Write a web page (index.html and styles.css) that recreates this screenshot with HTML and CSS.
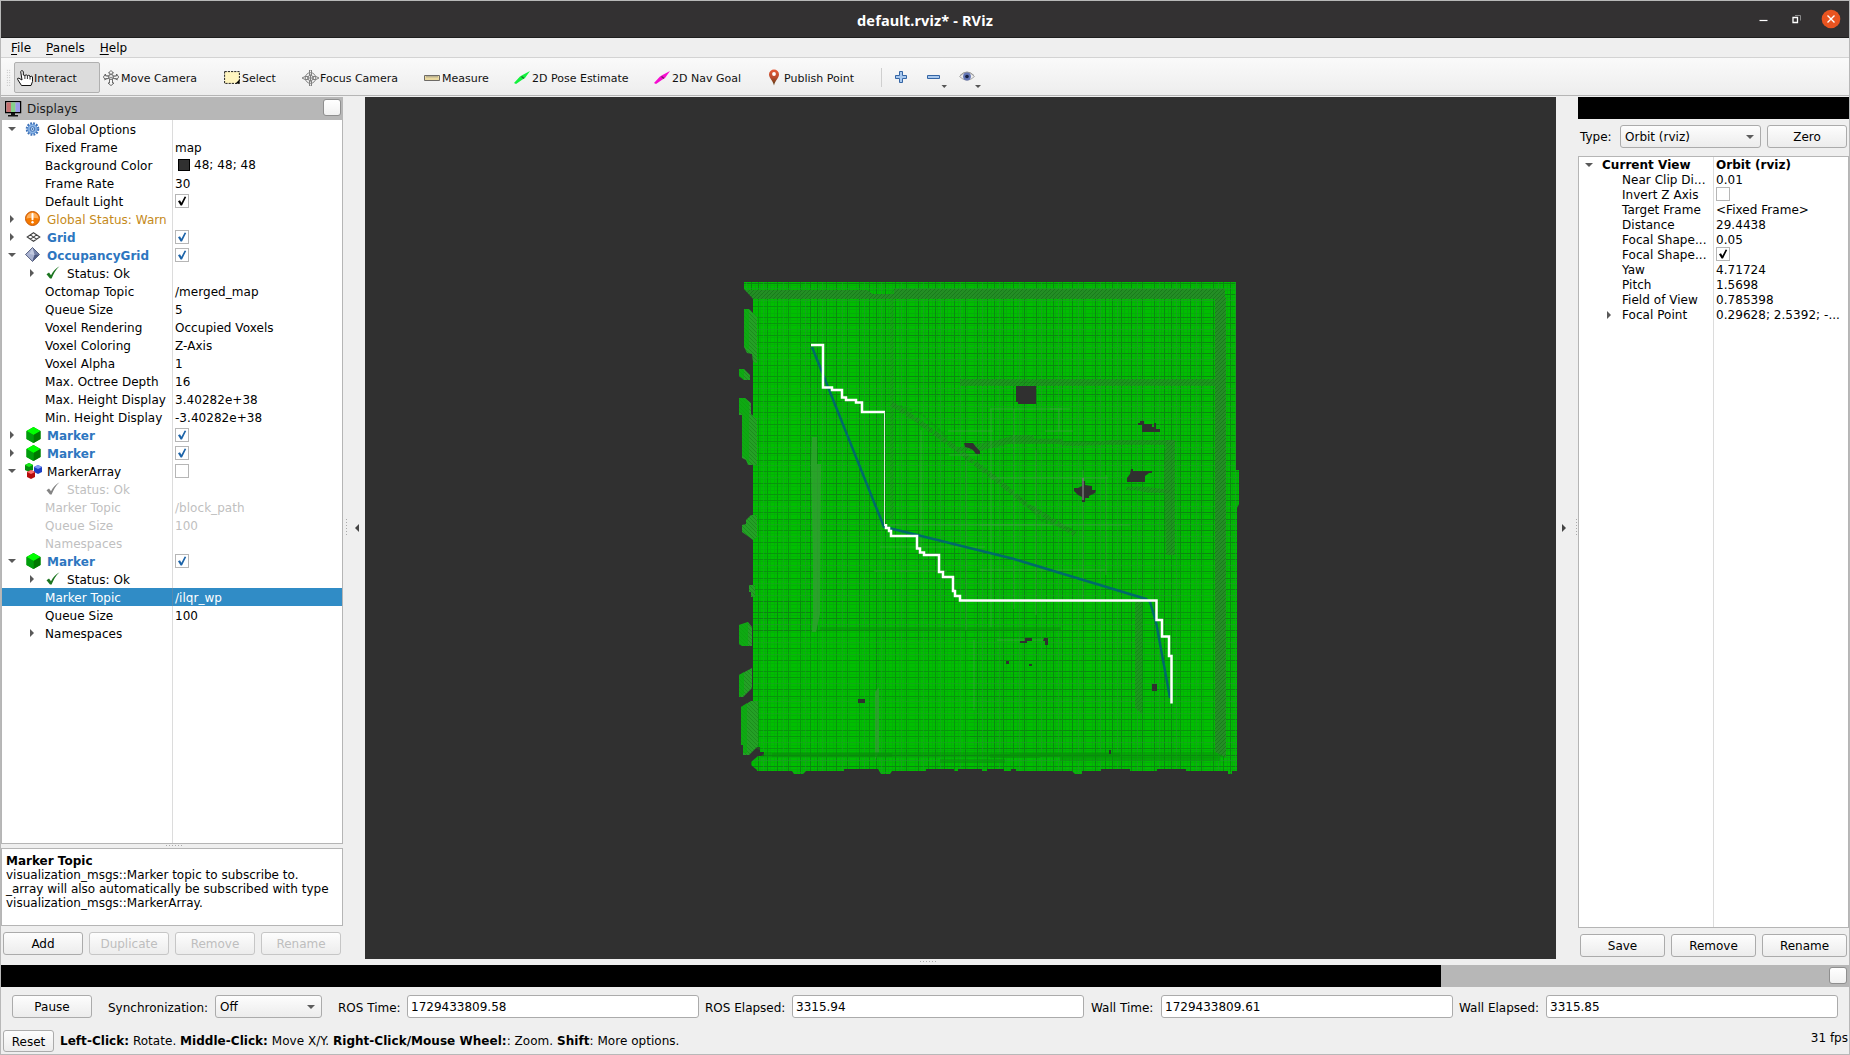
FILE: index.html
```html
<!DOCTYPE html>
<html lang="en">
<head>
<meta charset="utf-8">
<title>default.rviz* - RViz</title>
<link rel="stylesheet" href="styles.css">
</head>
<body>
<svg class="defs" width="0" height="0">
  <defs>
    <symbol id="cube" viewBox="0 0 16 16"><path d="M8 0l7 4v8l-7 4-7-4V4z" fill="#00a000"/><path d="M8 0l7 4-7 4-7-4z" fill="#00ff00"/><path d="M8 8l7-4v8l-7 4z" fill="#007800"/><path d="M1 4l7 4v8l-7-4z" fill="#009c0c"/></symbol>
    <symbol id="cubes" viewBox="0 0 17 16"><path d="M4 0l4 2v5L4 9 0 7V2z" fill="#078c10"/><path d="M4 0l4 2-4 2-4-2z" fill="#16ef16"/><path d="M13 2l4 2v5l-4 2-4-2V4z" fill="#1c3fc4"/><path d="M13 2l4 2-4 2-4-2z" fill="#7d98f4"/><path d="M6 7l4 2v5l-4 2-4-2V9z" fill="#b60d0d"/><path d="M6 7l4 2-4 2-4-2z" fill="#ff7070"/></symbol>
    <symbol id="tick" viewBox="0 0 14 13"><path d="M.5 8.300L3 6.600l2 2.600C7.300 5 9.600 2.300 13.500.300 9.500 4 7.500 8 5.600 12.500H4z" fill="currentColor"/></symbol>
    <symbol id="check" viewBox="0 0 14 14"><path d="M3 7.200l2-.9 1.400 2.400L9.700 2.500l1.500.4-4.200 8.600H5.600z" fill="currentColor"/></symbol>
    <symbol id="gear" viewBox="0 0 14 14"><circle cx="7" cy="7" r="5.700" fill="none" stroke="#3d71b8" stroke-width="2.200" stroke-dasharray="1.800 1.180"/><circle cx="7" cy="7" r="4.700" fill="#8db6e6" stroke="#5c90d2"/><circle cx="7" cy="7" r="2.300" fill="#c8def6" stroke="#3c6fb5"/><circle cx="7" cy="7" r=".9" fill="#3d6fae"/></symbol>
    <symbol id="warn" viewBox="0 0 15 15"><circle cx="7.500" cy="7.500" r="7" fill="#f57900" stroke="#c85a08"/><path d="M1.500 7.500a6 6 0 0 1 12 0c-4-1.200-8-1-12 0z" fill="#ffae5a"/><path d="M7.500 3v5.200" stroke="#fff" stroke-width="2" stroke-linecap="round"/><circle cx="7.500" cy="11.200" r="1.200" fill="#fff"/></symbol>
    <symbol id="grid" viewBox="0 0 14 10"><path d="M7 .7L13.300 5 7 9.300.700 5zM3.800 2.900l6.300 4.200M10.200 2.900L3.900 7.100" fill="none" stroke="#444" stroke-width="1.100"/></symbol>
    <symbol id="octo" viewBox="0 0 15 15"><path d="M7.500.500l7 7-7 7-7-7z" fill="#7682a8" stroke="#3c4667" stroke-width=".8"/><path d="M7.500 1l2 7-2 6-6.500-6.500z" fill="#a9b2d0"/><path d="M7.500 1l-3 6 5 1z" fill="#c3cae0"/><path d="M9.500 8L14 7.500 7.500 14z" fill="#4c5880"/></symbol>
    <symbol id="arrow" viewBox="0 0 16 13"><path d="M0 12L6 5.500 8.500 4 16 0 11 7 8.500 8.500 2 13z" fill="currentColor"/><path d="M7.500 5.500l2.500 2" stroke="#222" stroke-opacity=".6" stroke-width="1.500"/></symbol>
  </defs>
</svg>
<div class="window">
  <header class="titlebar">
    <span class="title">default.rviz* - RViz</span>
    <div class="controls">
      <svg width="9" height="20"><path d="M0.500 11.500h8" stroke="#fff" stroke-width="1.200"/></svg>
      <svg width="9" height="20"><path d="M3 6.500h5.500v5" fill="none" stroke="#8a8a8a"/><path d="M1 8.500h4.500v5H1z" fill="none" stroke="#fff" stroke-width="1.300"/></svg>
      <svg width="20" height="20"><circle cx="10" cy="10" r="9.300" fill="#e95420"/><path d="M6.500 6.500l7 7M13.500 6.500l-7 7" stroke="#fff" stroke-width="1.400"/></svg>
    </div>
  </header>
  <nav class="menubar"><span><u>F</u>ile</span><span><u>P</u>anels</span><span><u>H</u>elp</span></nav>
  <div class="toolbar">
    <i class="grip"></i>
    <div class="tool active t-interact"><svg width="16" height="16" viewBox="0 0 16 16"><path d="M4.500 15.500h9.500l1.500-4V6.800q-1.500-1.300-2.500 0V6q-1.300-1.500-2.600 0v-.5q-1.300-1.300-2.500 0L6.300 5V1.500Q4.800-.5 3.700 1.500L5 10 1.800 8.200Q0 8 .7 9.500z" fill="#fff" stroke="#111"/><path d="M7.900 5.500V9M10.400 6v3M13 6.500V9.500" stroke="#333"/></svg><span>Interact</span></div>
    <div class="tool t-move"><svg width="16" height="16" viewBox="0 0 16 16"><g fill="#f7f7f7" stroke="#5c5c5c" stroke-width=".9"><path d="M8 .5L10.500 3H9v3h4.500V4L15.700 7 13.500 10V8.500H9.500V13H11L8 15.600 5 13h1.500V8.500h-4V10L.4 7l2.100-3v1.800H7V3H5.500z"/><circle cx="8" cy="7" r="2.500"/></g><path d="M1 5l14 5M1 10l14-5" stroke="#777" stroke-width=".7"/></svg><span>Move Camera</span></div>
    <div class="tool t-select"><svg width="16" height="16" viewBox="0 0 16 16"><path d="M.6 1.600h14.800v11.800H.6z" fill="#fff5c0" stroke="#222" stroke-dasharray="2.200 1"/><path d="M15.500 9.500v4h-4z" fill="#000"/></svg><span>Select</span></div>
    <div class="tool t-focus"><svg width="17" height="16" viewBox="0 0 17 16"><g fill="none" stroke="#808080"><circle cx="8.500" cy="8" r="5.300"/><circle cx="8.500" cy="8" r="2.700"/><path d="M7.500 0h2v5h-2zM7.500 11h2v5h-2zM0 8l3-1.500h3v3H3zM17 8l-3-1.500h-3v3h3zM8.500 5v6M5.500 8h6"/></g></svg><span>Focus Camera</span></div>
    <div class="tool t-measure"><svg width="16" height="16" viewBox="0 0 16 16"><path d="M.5 5.500h15v5H.5z" fill="#ead9a0" stroke="#6d6a66"/><path d="M3 5.500v2M5 5.500v2M7 5.500v2M9 5.500v2M11 5.500v2M13 5.500v2" stroke="#777" stroke-width=".8"/></svg><span>Measure</span></div>
    <div class="tool t-pose"><svg class="green" width="16" height="13"><use href="#arrow"/></svg><span>2D Pose Estimate</span></div>
    <div class="tool t-nav"><svg class="pink" width="16" height="13"><use href="#arrow"/></svg><span>2D Nav Goal</span></div>
    <div class="tool t-point"><svg width="16" height="17" viewBox="0 0 16 17"><defs><linearGradient id="pin" x2="0" y2="1"><stop stop-color="#e75a36"/><stop offset=".5" stop-color="#b94b2d"/><stop offset="1" stop-color="#553c14"/></linearGradient></defs><path d="M8 .5a5 5 0 0 1 5 5C13 9 9 11.500 8 16.500 7 11.500 3 9 3 5.500a5 5 0 0 1 5-5z" fill="url(#pin)"/><circle cx="8" cy="5" r="1.900" fill="#fff"/></svg><span>Publish Point</span></div>
    <i class="sep"></i>
    <svg class="plus" width="14" height="14"><path d="M5.500 1.500h3v4h4v3h-4v4h-3v-4h-4v-3h4z" fill="#a8c8ee" stroke="#3465a4"/></svg>
    <svg class="minus" width="20" height="22"><path d="M.5 8.500h12v3H.5z" fill="#a8c8ee" stroke="#3465a4"/><path d="M14.500 18h5.500l-2.750 3z" fill="#555"/></svg>
    <svg class="eye" width="22" height="22"><path d="M.5 10.500Q8 2 15.500 10.500 8 18 .5 10.500z" fill="#eee" stroke="#aaa"/><path d="M1 9.500Q8 2.500 15 9.500" fill="none" stroke="#999"/><circle cx="8" cy="10.500" r="3.900" fill="#6275b5"/><circle cx="8" cy="10.500" r="1.800" fill="#152040"/><path d="M16 19h6l-3 3z" fill="#555"/></svg>
  </div>

  <main class="workspace">
    <aside class="displays">
      <div class="dock-head"><svg width="17" height="16"><path d="M.500.500h15v11H.500z" fill="#ccc" stroke="#000" stroke-width="1.500"/><path d="M1.500 1.500h4.500v9.500H1.500z" fill="#c77171"/><path d="M6 1.500h4.500v9.500H6z" fill="#86d08a"/><path d="M10.500 1.500h4.500v9.500h-4.500z" fill="#9c9ae8"/><path d="M6 12h4v2h3v1.500H3V14h3z" fill="#111"/></svg><span>Displays</span><i class="float"></i></div>
      <div class="tree">
        <div class="row"><i class="open"></i><div class="name top"><svg class="nudge" width="14" height="14"><use href="#gear"/></svg>Global Options</div><div class="val"></div></div>
        <div class="row"><div class="name prop">Fixed Frame</div><div class="val">map</div></div>
        <div class="row"><div class="name prop">Background Color</div><div class="val"><i class="swatch"></i><span class="rgb">48; 48; 48</span></div></div>
        <div class="row"><div class="name prop">Frame Rate</div><div class="val">30</div></div>
        <div class="row"><div class="name prop">Default Light</div><div class="val"><i class="box"><svg><use href="#check"/></svg></i></div></div>
        <div class="row"><i class="closed"></i><div class="name top warn"><svg class="nudge" width="15" height="15"><use href="#warn"/></svg>Global Status: Warn</div><div class="val"></div></div>
        <div class="row"><i class="closed"></i><div class="name top on"><svg width="14" height="10"><use href="#grid"/></svg>Grid</div><div class="val"><i class="box blue"><svg><use href="#check"/></svg></i></div></div>
        <div class="row"><i class="open"></i><div class="name top on"><svg class="nudge" width="15" height="15"><use href="#octo"/></svg>OccupancyGrid</div><div class="val"><i class="box blue"><svg><use href="#check"/></svg></i></div></div>
        <div class="row"><i class="closed sub"></i><div class="name status"><svg width="14" height="13"><use href="#tick"/></svg>Status: Ok</div><div class="val"></div></div>
        <div class="row"><div class="name prop">Octomap Topic</div><div class="val">/merged_map</div></div>
        <div class="row"><div class="name prop">Queue Size</div><div class="val">5</div></div>
        <div class="row"><div class="name prop">Voxel Rendering</div><div class="val">Occupied Voxels</div></div>
        <div class="row"><div class="name prop">Voxel Coloring</div><div class="val">Z-Axis</div></div>
        <div class="row"><div class="name prop">Voxel Alpha</div><div class="val">1</div></div>
        <div class="row"><div class="name prop">Max. Octree Depth</div><div class="val">16</div></div>
        <div class="row"><div class="name prop">Max. Height Display</div><div class="val">3.40282e+38</div></div>
        <div class="row"><div class="name prop">Min. Height Display</div><div class="val">-3.40282e+38</div></div>
        <div class="row"><i class="closed"></i><div class="name top on"><svg width="16" height="16"><use href="#cube"/></svg>Marker</div><div class="val"><i class="box blue"><svg><use href="#check"/></svg></i></div></div>
        <div class="row"><i class="closed"></i><div class="name top on"><svg width="16" height="16"><use href="#cube"/></svg>Marker</div><div class="val"><i class="box blue"><svg><use href="#check"/></svg></i></div></div>
        <div class="row"><i class="open"></i><div class="name top"><svg width="17" height="16"><use href="#cubes"/></svg>MarkerArray</div><div class="val"><i class="box"></i></div></div>
        <div class="row off"><div class="name status"><svg width="14" height="13"><use href="#tick"/></svg>Status: Ok</div><div class="val"></div></div>
        <div class="row off"><div class="name prop">Marker Topic</div><div class="val">/block_path</div></div>
        <div class="row off"><div class="name prop">Queue Size</div><div class="val">100</div></div>
        <div class="row off"><div class="name prop">Namespaces</div><div class="val"></div></div>
        <div class="row"><i class="open"></i><div class="name top on"><svg width="16" height="16"><use href="#cube"/></svg>Marker</div><div class="val"><i class="box blue"><svg><use href="#check"/></svg></i></div></div>
        <div class="row"><i class="closed sub"></i><div class="name status"><svg width="14" height="13"><use href="#tick"/></svg>Status: Ok</div><div class="val"></div></div>
        <div class="row selected"><div class="name prop">Marker Topic</div><div class="val">/ilqr_wp</div></div>
        <div class="row"><div class="name prop">Queue Size</div><div class="val">100</div></div>
        <div class="row"><i class="closed sub"></i><div class="name prop">Namespaces</div><div class="val"></div></div>
      </div>
      <div class="split"></div>
      <div class="help"><b>Marker Topic</b><br>visualization_msgs::Marker topic to subscribe to.<br>_array will also automatically be subscribed with type<br>visualization_msgs::MarkerArray.</div>
      <div class="buttons"><button>Add</button><button disabled>Duplicate</button><button disabled>Remove</button><button disabled>Rename</button></div>
    </aside>
    <div class="collapse left"><i></i><b></b></div>

    <svg class="view" width="1191" height="862" viewBox="365 97 1191 862">
      <defs>
        <pattern id="cells" width="59" height="59" patternUnits="userSpaceOnUse" x="753" y="282" shape-rendering="crispEdges">
          <path d="M0 0h59v59H0z" fill="#00be00"/>
          <path d="M2.500 0v59M7.500 0v59M12.500 0v59M17.500 0v59M21.500 0v59M28.500 0v59M33.500 0v59M37.500 0v59M44.500 0v59M49.500 0v59M54.500 0v59" stroke="#07ab0b"/>
          <path d="M0 3.500h59M0 8.500h59M0 15.500h59M0 20.500h59M0 27.500h59M0 31.500h59M0 38.500h59M0 43.500h59M0 50.500h59M0 55.500h59" stroke="#06ac0a"/>
          <path d="M5.500 0v59M14.500 0v59M24.500 0v59M35.500 0v59M47.500 0v59M57.500 0v59M0 1.500h59M0 12.500h59M0 24.500h59M0 35.500h59M0 41.500h59M0 53.500h59" stroke="#0b8711"/>
          <path d="M10.500 0v59M30.500 0v59M52.500 0v59M0 6.500h59M0 18.500h59M0 47.500h59" stroke="#20982a" stroke-opacity=".7"/>
        </pattern>
        <pattern id="hatch" width="4" height="4" patternUnits="userSpaceOnUse"><path d="M0 0h4v4H0z" fill="#278a28"/><path d="M-1 1l2-2M0 4l4-4M3 5l2-2" stroke="#167219" stroke-width=".8"/></pattern>
        <pattern id="side" width="4" height="4" patternUnits="userSpaceOnUse"><path d="M0 0h4v4H0z" fill="#24a026"/><path d="M0 0l4 4M0 4.500h4" stroke="#168018" stroke-width=".6"/></pattern>
      </defs>
      <path d="M365 97h1191v862H365z" fill="#303030"/>
      <path d="M744 282H1236V470h3v34l-2 4V771h-5v3h-4v-3H1186v-2H1157v2H1130v-2H1101v2H1082v3H1075l-3-3H1016v-2H1011v2H1004v-2H987v2H982v-2H958v2H954v-2H926v2H892l-2 3H881l-3-5H844v2H806l-3 3H794l-2-3H757v-1l-6-5v-3l7-6h6v-4h-4v-5H753V298L744 289z" fill="url(#cells)"/>
      <path d="M753 632h122v120H764l-11-5zM753 300h50v300h-50zM1180 560h34v190h-34zM880 640h90v110h-90z" fill="#00c400" opacity=".22"/>
      <g fill="url(#side)">
        <path d="M744 309h5l8 8v46l-4-1-1-8-5-1-3-6zM739 369h5l6 6v5h-6l-5-4zM739 398h6l6 5v11l6 5v46h-9l-2-5-4-2v-43h-3zM742 525l4-1v-4l5-5h6v22l-4 3-4-3-7-5zM749 585h6v12h-4v-5h-2zM739 625l9-3 4 5v19h-10l-3-2zM739 675l13-7v20l-9 9h-4zM741 707l10-6h7v45l-9 9h-6v-10h-2z"/>
      </g>
      <g fill="#07ad0c">
        <path d="M744 309h5v40h-2l-3-3zM739 369h5v11l-5-4zM739 398h6l4 5v60h-1l-2-5-4-2v-43h-3zM739 625l9-3v24h-6l-3-2zM739 675l5-3v22l-5 3zM741 707l6-4v50h-4v-8h-2z" opacity=".7"/>
      </g>
      <g fill="url(#hatch)">
        <path d="M745 290h122l6 4h21v-5h331v10H753z" opacity=".9"/>
        <path d="M1215 297h11v461l-11-6z" opacity=".92"/>
        <path d="M960 379h256v7H960z" opacity=".65"/>
        <path d="M998 440l16-5h20v4h28l2 3h30l16-2h65v5h-65l-30 1h-16l-5-2h-50l-29 7h-20v-4z" opacity=".55"/>
        <path d="M1166 440h9v115h-9l-1-50-1-35z" opacity=".7"/>
        <path d="M1135 602h7v112l-7-6z" opacity=".65"/>
        <path d="M890 290h4v230h-4z" opacity=".4"/>
        <path d="M1126 487h22l22 3v3h-22l-12-3h-10z" opacity=".6"/>
      </g>
      <path d="M892 404l22 14 40 29 43 33 30 25 48 29" fill="none" stroke="url(#hatch)" stroke-width="5" stroke-dasharray="9 1 5 2" opacity=".6"/>
      <path d="M900 406l22 8 26 24M1020 498l24 24 30 8" fill="none" stroke="#168a18" stroke-width="2" stroke-dasharray="3 2" opacity=".5"/>
      <g fill="#329f32" opacity=".8"><path d="M812 437h5v27h4l-1 150-4 18h-4l1-18v-50l-2-100zM875 692l4-5v65l-4 8z"/></g>
      <path d="M820 627h241v4H820zM765 752h450l11 5H760z" fill="#078d09" opacity=".5"/>
      <path d="M772 755h120M1010 755h110M940 761h65M990 756h50M1060 759h160" stroke="#078d09" stroke-width="4" opacity=".45"/>
      <path d="M890 525h240M880 547h105M874 571h73M980 570h127M990 409h80M1050 409h12M1045 431h28M990 478h118M980 525h72M997 640h52M949 455h30M948 431h45M1014 409v200M991 409v218M921 430v120M966 460v170M1036 450v165M1083 470v130M1106 475v100M974 640v70M1059 409v22" stroke="#6fa66f" opacity=".35"/>
      <g fill="#303030">
        <path d="M1016 386h20v18h-18v-2h-2zM1140 421h4v3h8v3h2v-4h2v6h4v3h-18v-7h-4v-2h2zM1131 469h2v2h19v2h-3l-4 3v6h-18v-4l3-4zM1082 481h3v4l7 1v4h4l-1 3-6 3v2h-4v4h-3v-5l-4-2-4-4v-3h4l4-2zM964 443h9l3 4 4 4v3h-4l-3-4-4-2-4-1zM1025 638h7v3h-5v2h-7v-2h5zM1044 638h4v7h-3v-4h-2zM1006 661h3v3h-3zM1029 664h3v2h-3zM858 699h7v4h-7zM1152 684h5v7h-5zM1109 750h2v4h-2z"/>
      </g>
      <path d="M1083 478v22" stroke="#777" stroke-width="1.500"/>
      <path d="M812 347L884 527l5 1 125 31 132 40 4 3 6 20 14 76" fill="none" stroke="#006a6a" stroke-width="2.500"/>
      <path d="M811 345H823V387.500H832V390H842V397.500H846V400H856V402.500H862V412H885" fill="none" stroke="#fff" stroke-width="2.500"/>
      <path d="M884.500 412V526" stroke="#d8efd8" stroke-width="1"/>
      <path d="M886 524v4h3v3h2v5h26v12.500h3v4h4v2.500h15v17h4v5h10v14h2v5h5v4.500H1156.500V620H1162v16.500h7V656h2.500v47.500" fill="none" stroke="#fff" stroke-width="2.500"/>
    </svg>

    <div class="collapse right"><i></i><b></b></div>
    <aside class="views">
      <div class="blackout"></div>
      <div class="type-row"><label>Type:</label><div class="combo">Orbit (rviz)<i></i></div><button>Zero</button></div>
      <div class="tree compact">
        <div class="row head"><i class="open"></i><div class="name top">Current View</div><div class="val">Orbit (rviz)</div></div>
        <div class="row"><div class="name prop">Near Clip Di...</div><div class="val">0.01</div></div>
        <div class="row"><div class="name prop">Invert Z Axis</div><div class="val"><i class="box"></i></div></div>
        <div class="row"><div class="name prop">Target Frame</div><div class="val">&lt;Fixed Frame&gt;</div></div>
        <div class="row"><div class="name prop">Distance</div><div class="val">29.4438</div></div>
        <div class="row"><div class="name prop">Focal Shape...</div><div class="val">0.05</div></div>
        <div class="row"><div class="name prop">Focal Shape...</div><div class="val"><i class="box"><svg><use href="#check"/></svg></i></div></div>
        <div class="row"><div class="name prop">Yaw</div><div class="val">4.71724</div></div>
        <div class="row"><div class="name prop">Pitch</div><div class="val">1.5698</div></div>
        <div class="row"><div class="name prop">Field of View</div><div class="val">0.785398</div></div>
        <div class="row"><i class="closed sub"></i><div class="name prop">Focal Point</div><div class="val">0.29628; 2.5392; -...</div></div>
      </div>
      <div class="buttons"><button>Save</button><button>Remove</button><button>Rename</button></div>
    </aside>
  </main>

  <div class="hsplit"></div>
  <div class="time-head"><i class="float"></i></div>
  <div class="time-row">
    <button>Pause</button>
    <label class="l-sync">Synchronization:</label><div class="combo">Off<i></i></div>
    <label class="l-ros">ROS Time:</label><div class="field">1729433809.58</div>
    <label class="l-rose">ROS Elapsed:</label><div class="field">3315.94</div>
    <label class="l-wall">Wall Time:</label><div class="field">1729433809.61</div>
    <label class="l-walle">Wall Elapsed:</label><div class="field">3315.85</div>
  </div>
  <footer class="statusbar"><button>Reset</button><p><b>Left-Click:</b> Rotate. <b>Middle-Click:</b> Move X/Y. <b>Right-Click/Mouse Wheel:</b>: Zoom. <b>Shift</b>: More options.</p><span class="fps">31 fps</span></footer>
</div>
</body>
</html>
```
FILE: styles.css
```css
* { box-sizing: border-box; }
body { margin: 0; font: 12px/14px "DejaVu Sans", sans-serif; color: #000; }
i { font-style: normal; flex: none; }
svg { flex: none; display: block; }
.defs { position: absolute; }
.window { width: 1850px; height: 1055px; border: 1px solid #b8b8b8; background: #efefef; display: flex; flex-direction: column; overflow: hidden; white-space: nowrap; }

.titlebar { height: 37px; flex: none; background: #333132; border-bottom: 1px solid #1e1e1e; display: grid; grid-template-columns: 1fr auto 1fr; align-items: center; }
.title { grid-column: 2; color: #fff; font: bold 14.500px/18px "Noto Sans", sans-serif; letter-spacing: .15px; padding-top: 1px; }
.controls { display: flex; justify-content: flex-end; align-items: center; gap: 25px; padding-right: 8px; }
.controls svg:nth-child(2) { margin-left: -1px; }
.controls svg:nth-child(3) { margin-left: -5px; }

.menubar { height: 20px; flex: none; border-bottom: 1px solid #d3d3d3; display: flex; gap: 15px; padding: 3px 0 0 10px; }
.menubar u { text-underline-offset: 2px; }

.toolbar { height: 39px; flex: none; background: linear-gradient(#fafafa, #ededed); border-bottom: 1px solid #efefef; box-shadow: inset 0 -1px #b5b5b5; display: flex; padding-left: 5px; font-size: 11px; }
.grip { width: 5px; height: 18px; margin: 11px 3px 0 0; background: radial-gradient(circle, #aaa 35%, transparent 45%) 0 0 / 2.500px 2.500px; }
.tool { height: 31px; margin-top: 4px; display: flex; align-items: center; gap: 2px; padding-left: 3px; color: #111; }
.tool span { padding-top: 2px; }
.tool.active { background: #dcdcdc; border: 1px solid #b0b0b0; border-radius: 2px; padding-left: 2px; }
.t-interact { width: 86px; } .t-move { width: 121px; } .t-select { width: 78px; } .t-focus { width: 122px; gap: 1px; }
.t-move { letter-spacing: -.02px; } .t-interact { gap: 1px; }
.t-measure { width: 90px; } .t-pose { width: 140px; } .t-nav { width: 112px; } .t-point { width: 118px; }
.tool .green { color: #12f23c; } .tool .pink { color: #f60cd0; }
.t-pose { gap: 2px; } .t-nav { gap: 2px; }
.sep { width: 1px; height: 19px; margin-top: 10px; background: #cfcfcf; }
.plus { margin: 12px 0 0 12px; } .minus { margin: 9px 0 0 19px; } .eye { margin: 8px 0 0 12px; }

.workspace { height: 862px; flex: none; display: flex; }
.displays { width: 342px; display: flex; flex-direction: column; }
.dock-head { height: 23px; background: #b7b7b7; display: flex; align-items: center; padding: 0 2px 0 4px; gap: 5px; font-size: 12px; color: #1a1a1a; }
.dock-head .float { margin-left: auto; margin-top: -2px; }
.float { width: 18px; height: 17px; border: 1px solid #8f8f8f; border-radius: 3px; background: linear-gradient(#fff, #f1f1f1); }

.tree { border: 1px solid #b5b5b5; border-top: 0; background: linear-gradient(#dcdcdc, #dcdcdc) 170px 0 / 1px 100% no-repeat #fff; height: 724px; letter-spacing: .04px; }
.row { height: 18px; display: grid; grid-template-columns: 171px 1fr; align-items: center; }
.row > i { grid-area: 1 / 1; }
.name { grid-area: 1 / 1; display: flex; align-items: center; overflow: hidden; padding-top: 1px; height: 18px; }
.name svg { margin-top: -2px; }
.val { grid-area: 1 / 2; padding-left: 2px; display: flex; align-items: center; padding-top: 1px; height: 18px; }
.top { padding-left: 23px; } .top svg { width: 17px; margin-right: 5px; }
.top .nudge { margin-left: -1px; margin-right: 6px; }
.prop { padding-left: 43px; }
.status { padding-left: 44px; gap: 7px; } .status svg { color: #1c7520; }
.on { color: #2d76c0; font-weight: bold; } .warn { color: #c58a1a; }
.off { color: #bfbfbf; } .off .status svg { color: #848484; }
.selected { background: linear-gradient(#5689b0, #5689b0) 170px 0 / 1px 100% no-repeat #308cc6; color: #fff; }
.open, .closed { width: 0; height: 0; border: 4px solid transparent; }
.open { border-top-color: #595959; margin: 4px 0 0 6px; }
.closed { border-left-color: #595959; margin-left: 8px; }
.closed.sub { margin-left: 28px; }
.box { width: 14px; height: 14px; border: 1px solid #b6b6b6; background: #fff; margin-top: -1px; }
.box svg { width: 14px; height: 14px; margin: -1px; } .box.blue svg { color: #1c63a8; }
.swatch { width: 12px; height: 12px; background: #303030; border: 1px solid #000; margin: -1px 4px 0 3px; }
.rgb { margin-top: -2px; }
.split { height: 4px; flex: none; background: radial-gradient(circle, #aaa 35%, transparent 45%) 164px 0 / 3px 3px repeat-x; clip-path: inset(0 160px 0 164px); }
.help { height: 78px; border: 1px solid #b5b5b5; background: #fff; padding: 5px 0 0 4px; }
button, .combo, .field { height: 23px; border: 1px solid #ababab; border-radius: 3px; background: linear-gradient(#fdfdfd, #ececec); font: 12px/14px "DejaVu Sans", sans-serif; color: #000; padding: 0; }
button:disabled { color: #bebebe; border-color: #c6c6c6; }
.buttons { display: flex; gap: 6px; padding: 6px 2px 0; }
.buttons button { flex: 1; }

.collapse { width: 22px; display: flex; align-items: center; }
.collapse i { width: 1px; height: 17px; background: repeating-linear-gradient(#aaa 0 1px, transparent 1px 3px); margin-left: 3px; margin-top: -1px; }
.collapse b { border: 4px solid transparent; width: 0; height: 0; }
.collapse.left b { border-right-color: #444; margin-left: 4px; }
.collapse.right i { order: 2; margin-left: 6px; }
.collapse.right b { border-left-color: #444; margin-left: 6px; }

.views { width: 271px; display: flex; flex-direction: column; }
.blackout { height: 22px; background: #000; }
.type-row { display: flex; height: 37px; padding: 6px 2px 0 2px; }
.type-row label { width: 40px; padding-top: 5px; }
.type-row .combo { width: 141px; margin-right: 6px; }
.type-row button { width: 80px; }
.combo { display: flex; justify-content: space-between; padding: 4px 6px 0 4px; }
.combo i { width: 0; height: 0; border: 4px solid transparent; border-top-color: #5c5c5c; margin-top: 5px; }
.compact { height: 772px; border-top: 1px solid #b5b5b5; background-position: 134px 0; }
.compact .row { height: 15px; grid-template-columns: 135px 1fr; }
.compact .name, .compact .val { height: 15px; padding-top: 1px; }
.compact .head { font-weight: bold; }
.compact .box { margin-top: -2px; }
.compact .prop { padding-left: 43px; }

.hsplit { height: 6px; flex: none; background: radial-gradient(circle, #aaa 35%, transparent 45%) 0 1px / 3px 3px repeat-x; clip-path: inset(0 911px 0 919px); }
.time-head { height: 22px; flex: none; background: linear-gradient(90deg, #000 1440px, #b7b7b7 1440px); display: flex; justify-content: flex-end; padding: 2px 2px 0 0; }
.time-row { display: flex; height: 43px; flex: none; padding: 8px 0 0 11px; }
.time-row button { width: 80px; } .time-row .combo { width: 107px; }
.time-row label { padding-top: 6px; flex: none; }
.l-sync { width: 123px; padding-left: 16px; } .l-ros { width: 85px; padding-left: 16px; }
.l-rose { width: 93px; padding-left: 6px; } .l-wall { width: 77px; padding-left: 7px; } .l-walle { width: 93px; padding-left: 6px; }
.field { width: 292px; background: #fff; padding: 4px 0 0 3px; }
.statusbar { display: flex; flex: 1; padding: 0 1px 0 2px; }
.statusbar button { width: 51px; height: 22px; padding-top: 1px; } .statusbar p { margin: 4px 0 0 6px; letter-spacing: .035px; }
.fps { margin-left: auto; padding-top: 1px; }
```
